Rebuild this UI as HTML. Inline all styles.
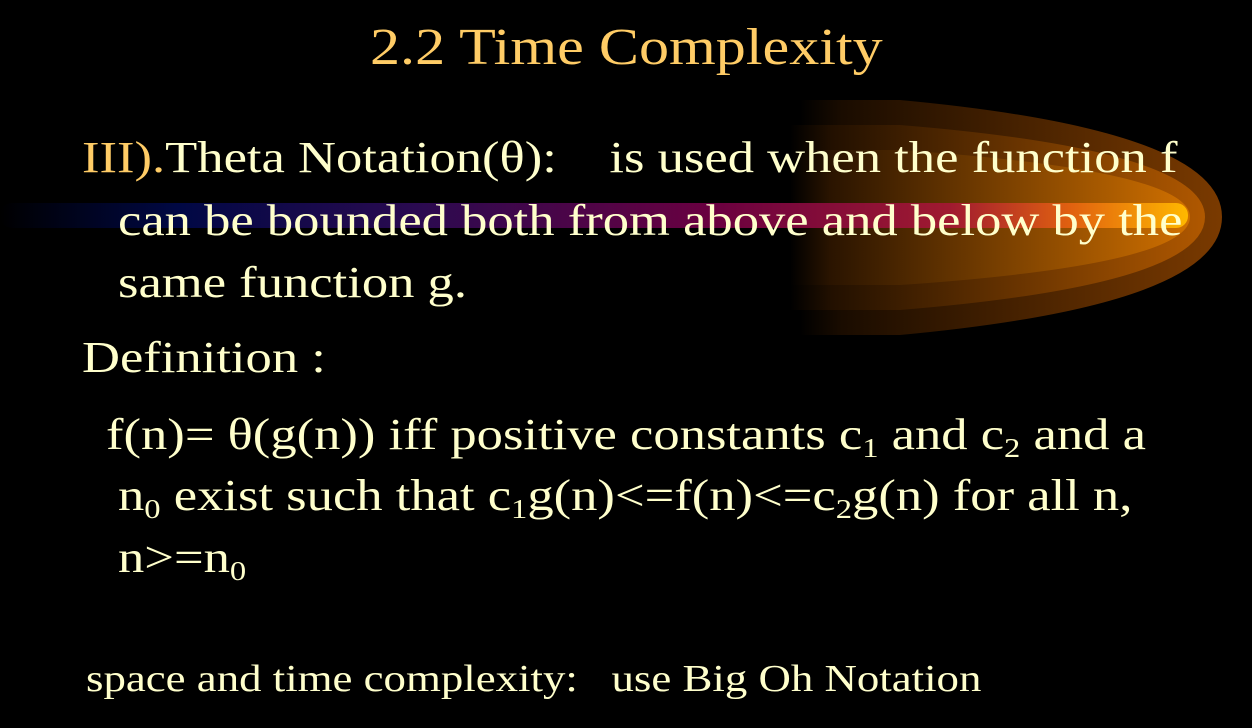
<!DOCTYPE html>
<html><head><style>
body{margin:0;width:1252px;height:728px;background:#000;overflow:hidden;position:relative;font-family:"Liberation Serif",serif;color:#FFFFCC}
.t{position:absolute;white-space:nowrap;line-height:1;transform:scaleX(1.195);transform-origin:0 0}
sub{font-size:0.62em;vertical-align:-0.3em;line-height:0}
</style></head><body>
<svg width="1252" height="728" style="position:absolute;left:0;top:0">
<defs>
<linearGradient id="o" x1="0" x2="1"><stop offset="0" stop-color="#000"/><stop offset="0.1" stop-color="#1a0c00"/><stop offset="1" stop-color="#7a3a00"/></linearGradient>
<linearGradient id="o2" x1="0" x2="1"><stop offset="0" stop-color="#000"/><stop offset="0.1" stop-color="#221000"/><stop offset="1" stop-color="#b05800"/></linearGradient>
<linearGradient id="o3" x1="0" x2="1"><stop offset="0" stop-color="#000"/><stop offset="0.1" stop-color="#2a1400"/><stop offset="1" stop-color="#d07000"/></linearGradient>
<linearGradient id="b" x1="0" x2="1"><stop offset="0" stop-color="#000"/><stop offset="0.15" stop-color="#000844"/><stop offset="0.35" stop-color="#2a0a50"/><stop offset="0.6" stop-color="#6a0040"/><stop offset="0.8" stop-color="#a01a30"/><stop offset="0.9" stop-color="#e06010"/><stop offset="1" stop-color="#ffb800"/></linearGradient>
</defs>
<path d="M800 100 L900 100 Q1222 130 1222 217 Q1222 305 900 335 L800 335 Z" fill="url(#o)"/>
<path d="M790 125 L900 125 Q1205 150 1205 217 Q1205 285 900 310 L790 310 Z" fill="url(#o2)"/>
<path d="M790 150 L900 150 Q1190 170 1190 217 Q1190 265 900 285 L790 285 Z" fill="url(#o3)"/>
<rect x="0" y="203" width="1188" height="25" rx="12" fill="url(#b)"/>
</svg>
<div class="t" style="left:370px;top:22px;font-size:52px;color:#FFCC66;transform:scaleX(1.156)">2.2 Time Complexity</div>
<div class="t" style="left:82px;top:136px;font-size:44px"><span style="color:#FFCC66">III).</span>Theta Notation(θ):&nbsp;&nbsp;&nbsp; is used when the function f</div>
<div class="t" style="left:118px;top:199px;font-size:44px">can be bounded both from above and below by the</div>
<div class="t" style="left:118px;top:261px;font-size:44px">same function g.</div>
<div class="t" style="left:82px;top:336px;font-size:44px">Definition :</div>
<div class="t" style="left:106px;top:413px;font-size:44px">f(n)= θ(g(n)) iff positive constants c<sub>1</sub> and c<sub>2</sub> and a</div>
<div class="t" style="left:118px;top:474px;font-size:44px">n<sub>0</sub> exist such that c<sub>1</sub>g(n)&lt;=f(n)&lt;=c<sub>2</sub>g(n) for all n,</div>
<div class="t" style="left:118px;top:536px;font-size:44px">n&gt;=n<sub>0</sub></div>
<div class="t" style="left:86px;top:660px;font-size:38px;transform:scaleX(1.18)">space and time complexity:&nbsp;&nbsp; use Big Oh Notation</div>
</body></html>
